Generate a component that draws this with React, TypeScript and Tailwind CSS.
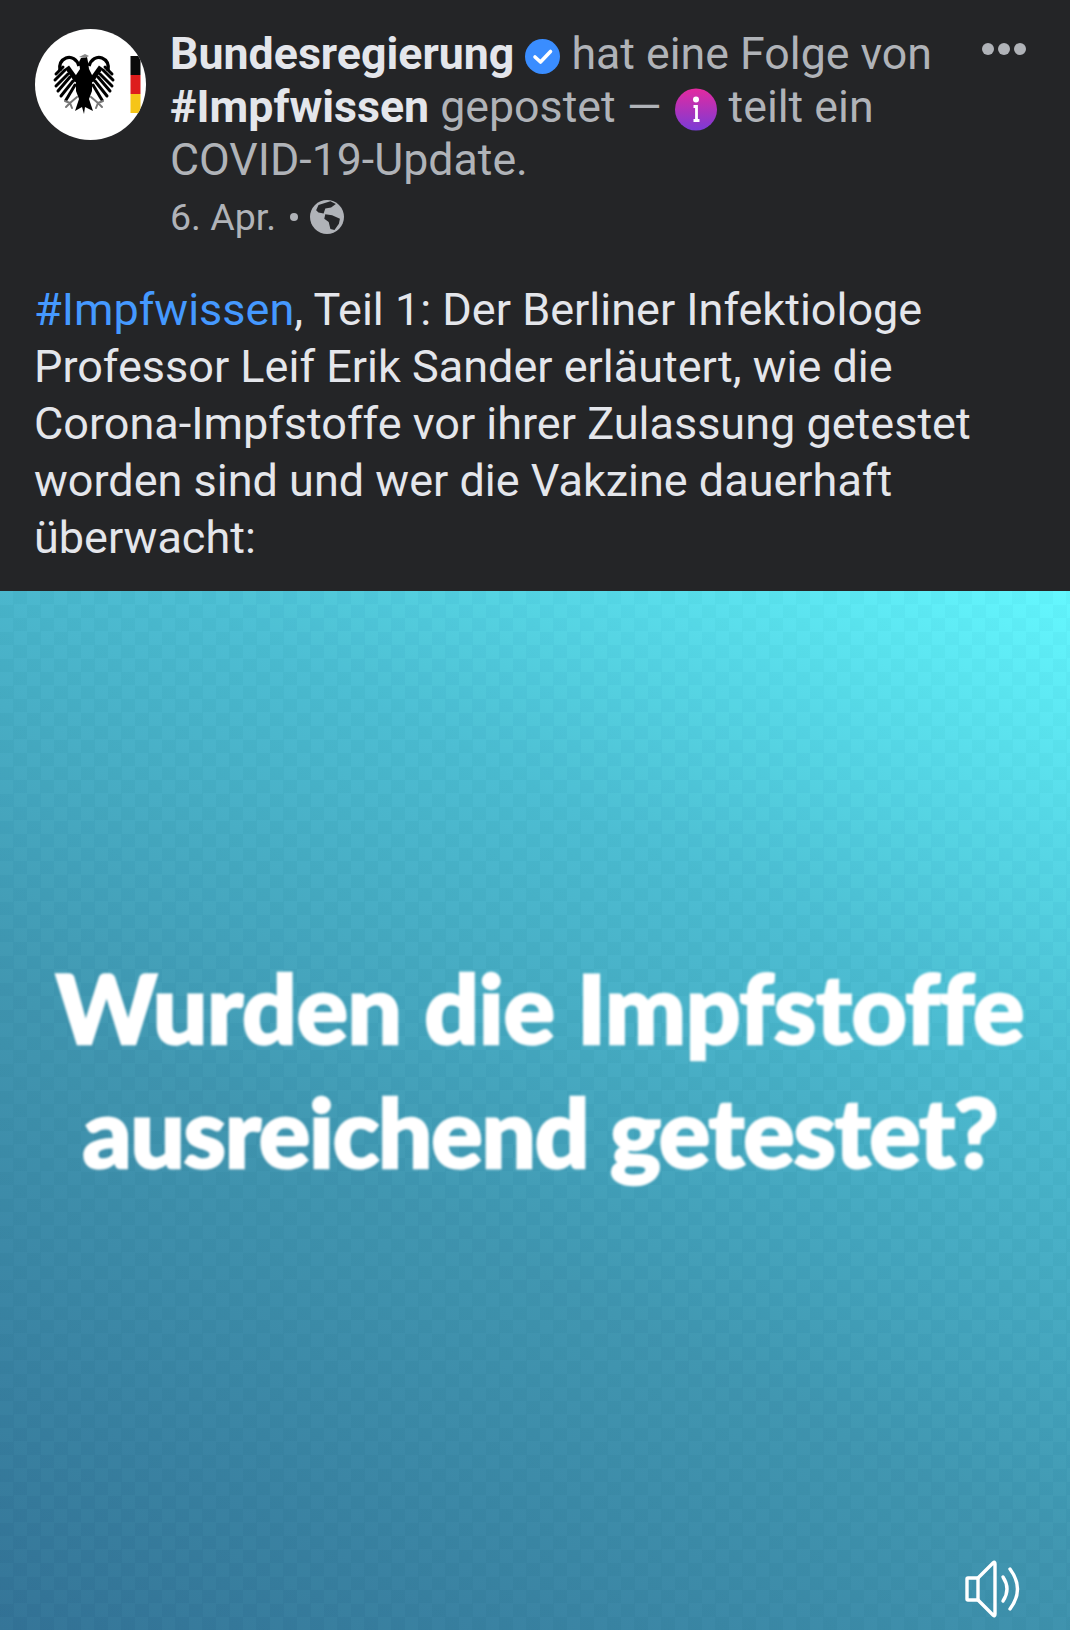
const Avatar = () => (
  <svg width="111" height="111" viewBox="0 0 111 111" className="shrink-0">
    <defs>
      <clipPath id="avatarClip">
        <circle cx="55.5" cy="55.5" r="55.5" />
      </clipPath>
    </defs>
    <g clipPath="url(#avatarClip)">
      <rect width="111" height="111" fill="#fff" />
      <rect x="95.5" y="27" width="10" height="19" fill="#0a0a0a" />
      <rect x="95.5" y="46" width="10" height="19" fill="#dd1c1c" />
      <rect x="95.5" y="65" width="10" height="19" fill="#f5c518" />
    </g>
    {/* eagle: left half, mirrored for the right */}
    {[0, 1].map((side) => (
      <g key={side} transform={side ? "translate(98 0) scale(-1 1)" : undefined}>
        <path d="M44 37 C42 30 36 27 31 29 C26 31 24 36 25 42" fill="none" stroke="#000" strokeWidth="3.4" />
        <path d="M32 38 L42 52" stroke="#000" strokeWidth="5" />
        <g stroke="#000" strokeWidth="3" strokeLinecap="round">
          <line x1="28" y1="38" x2="21" y2="45" />
          <line x1="30" y1="41" x2="20" y2="51" />
          <line x1="33" y1="45" x2="21" y2="57" />
          <line x1="35" y1="48" x2="23" y2="62" />
          <line x1="38" y1="52" x2="26" y2="67" />
          <line x1="40" y1="56" x2="31" y2="71" />
        </g>
        <g stroke="#777" strokeWidth="2" strokeLinecap="round" fill="none">
          <path d="M42 68 L35 74" />
          <path d="M35 74 L30 72 M35 74 L31 78 M35 74 L37 79" />
        </g>
      </g>
    ))}
    <path d="M44 33 L46 29 L52 28 L53 33 L54 40 L57 46 L57 62 L54 70 L58 82 L50 78 L49 85 L47 78 L40 82 L44 70 L41 62 L41 46 L45 40 Z" fill="#000" />
    <path d="M44 28 L50 25 L54 27 L50 29 Z" fill="#888" />
  </svg>
);

const VerifiedBadge = () => (
  <svg width="35" height="35" viewBox="0 0 35 35" className="inline-block align-[-5px] mx-[11px]">
    <circle cx="17.5" cy="17.5" r="17.5" fill="#3a8dff" />
    <path d="M10 18 L15.5 23 L25.5 12.5" fill="none" stroke="#fff" strokeWidth="3.6" strokeLinecap="round" strokeLinejoin="round" />
  </svg>
);

const InfoBadge = () => (
  <svg width="42" height="43" viewBox="0 0 42 43" className="inline-block align-[-9px] ml-[13px] mr-[12px]">
    <defs>
      <linearGradient id="infoGrad" x1="0" y1="0" x2="0" y2="1">
        <stop offset="0" stopColor="#e42aa0" />
        <stop offset="1" stopColor="#7a3bd6" />
      </linearGradient>
    </defs>
    <circle cx="21" cy="21.5" r="21" fill="url(#infoGrad)" />
    <circle cx="21" cy="11.5" r="3" fill="#fff" />
    <path d="M18.5 18.5 H21.5 V32 M18.5 32.5 H24.5" fill="none" stroke="#fff" strokeWidth="2.8" />
  </svg>
);

const Globe = () => (
  <svg width="34" height="34" viewBox="0 0 100 100" className="ml-[12px]">
    <circle cx="50" cy="50" r="50" fill="#b0b3b8" />
    <path d="M25 15 L60 4 L76 12 L62 22 L45 25 L40 40 L25 37 L18 30 Z" fill="#242527" />
    <path d="M45 42 L65 45 L88 55 L85 70 L72 88 L60 85 L55 65 L42 55 Z" fill="#242527" />
  </svg>
);

const Speaker = () => (
  <svg width="56" height="58" viewBox="0 0 56 58" fill="none" stroke="#fff" strokeWidth="3.4" strokeLinecap="round" strokeLinejoin="round">
    <path d="M13 18 H3 Q2 18 2 19 V39 Q2 40 3 40 H13 L28 55 Q30 57 30 54 V4 Q30 1 28 3 Z" />
    <line x1="13" y1="18" x2="13" y2="40" />
    <path d="M38 17 Q46 29 38 41" />
    <path d="M45 9 Q60 29 45 49" />
  </svg>
);

export default function App() {
  return (
    <div className="w-[1070px] h-[1630px] flex flex-col bg-[#242527] overflow-hidden font-['Roboto',sans-serif]">
      <div className="h-[591px] shrink-0 px-[35px] pt-[29px]">
        <div className="flex">
          <Avatar />
          <div className="ml-[24px] -mt-[1px] flex-1 relative">
            <p className="text-[44.7px] leading-[53px] text-[#b0b3b8] whitespace-nowrap">
              <span className="font-bold text-[#e4e6eb]">Bundesregierung</span>
              <VerifiedBadge />
              hat eine Folge von
              <br />
              <span className="font-bold text-[#e4e6eb]">#Impfwissen</span> gepostet —
              <InfoBadge />
              teilt ein
              <br />
              COVID-19-Update.
            </p>
            <div className="flex items-center mt-[8px] text-[37.5px] leading-[44px] text-[#b0b3b8]">
              <span>6. Apr.</span>
              <span className="ml-[14px] w-[8px] h-[8px] rounded-full bg-[#b0b3b8]" />
              <Globe />
            </div>
            <div className="absolute right-[9px] top-[15px] flex gap-[4px]">
              <span className="w-[12px] h-[12px] rounded-full bg-[#b0b3b8]" />
              <span className="w-[12px] h-[12px] rounded-full bg-[#b0b3b8]" />
              <span className="w-[12px] h-[12px] rounded-full bg-[#b0b3b8]" />
            </div>
          </div>
        </div>
        <p className="-ml-[1px] mt-[42px] text-[45px] leading-[57px] text-[#e4e6eb] whitespace-nowrap">
          <span className="text-[#4599ff]">#Impfwissen</span>, Teil 1: Der Berliner Infektiologe
          <br />
          Professor Leif Erik Sander erläutert, wie die
          <br />
          Corona-Impfstoffe vor ihrer Zulassung getestet
          <br />
          worden sind und wer die Vakzine dauerhaft
          <br />
          überwacht:
        </p>
      </div>
      <div className="relative flex-1 flex items-center justify-center pl-[10px] pb-[84px] bg-[repeating-conic-gradient(rgba(0,40,70,0.025)_0_25%,rgba(255,255,255,0.01)_0_50%),linear-gradient(208deg,#62f8ff_0%,#4bbdd2_30%,#3f96b0_60%,#337397_100%)] bg-[length:27px_27px,100%_100%]">
        <p className="text-center text-white font-['Lato',sans-serif] font-black text-[96px] leading-[124px] whitespace-nowrap blur-[0.8px] [-webkit-text-stroke:2.5px_white]">
          <span className="tracking-[-0.3px]">Wurden die Impfstoffe</span>
          <br />
          <span className="tracking-[-1.2px]">ausreichend getestet?</span>
        </p>
        <div className="absolute right-[49px] bottom-[12px]">
          <Speaker />
        </div>
      </div>
    </div>
  );
}
